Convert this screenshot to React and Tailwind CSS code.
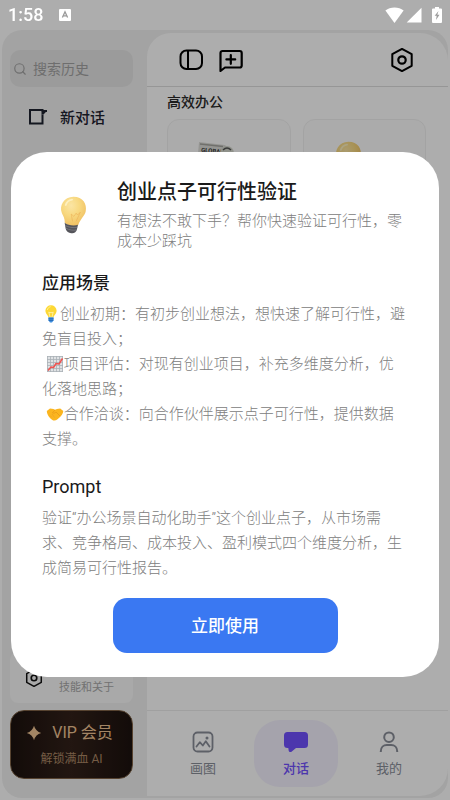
import { Search } from 'lucide-react';

const fontStack = "font-[Roboto,'Noto_Sans_CJK_SC',sans-serif]";

function InputMethodIcon() {
  return (
    <svg aria-hidden="true" className="h-3 w-3" viewBox="0 0 12 12">
      <rect width="12" height="12" rx="1" fill="#fff" />
      <path d="M3.4 8.6 6 2.8l2.6 5.8M4.4 6.8h3.2" fill="none" stroke="#9a9a9a" strokeWidth="1.3" />
    </svg>
  );
}

function WifiIcon() {
  return (
    <svg aria-hidden="true" className="h-4 w-[19px]" viewBox="0 0 20 16" preserveAspectRatio="none">
      <path d="M10 16 .4 3.6C3 1.4 6.4.5 10 .5s7 .9 9.6 3.1L10 16z" fill="#fff" />
    </svg>
  );
}

function SignalIcon() {
  return (
    <svg aria-hidden="true" className="h-4 w-4" viewBox="0 0 16 16">
      <path d="M15.5.8v14.7H.7z" fill="#fff" />
    </svg>
  );
}

function BatteryIcon() {
  return (
    <svg aria-hidden="true" className="h-4 w-[10px]" viewBox="0 0 10 16">
      <path d="M3 0h4v1.5h2a1 1 0 0 1 1 1V15a1 1 0 0 1-1 1H1a1 1 0 0 1-1-1V2.5a1 1 0 0 1 1-1h2z" fill="#fff" />
      <path d="M6.5 4 2.7 8.8h2L4 13l3.5-5.2H5.3z" fill="#9b9b9b" />
    </svg>
  );
}

function PanelIcon() {
  return (
    <svg aria-hidden="true" className="h-6 w-6" viewBox="0 0 24 24" fill="none" stroke="currentColor" strokeWidth="2">
      <rect x="1.5" y="2.5" width="21.5" height="18.5" rx="6" />
      <path d="M9 2.5V21" />
    </svg>
  );
}

function ChatPlusIcon() {
  return (
    <svg aria-hidden="true" className="h-6 w-6" viewBox="0 0 24 24" fill="none" stroke="currentColor" strokeWidth="2.2" strokeLinejoin="round" strokeLinecap="round">
      <path d="M1.5 23V5a2 2 0 0 1 2-2h17.2a2 2 0 0 1 2 2v12.500a2 2 0 0 1-2 2H6z" />
      <path d="M11.8 7v8.800M7.400 11.400h8.800" />
    </svg>
  );
}

function HexIcon({ className }) {
  return (
    <svg aria-hidden="true" className={className} viewBox="0 0 24 24" fill="none" stroke="currentColor" strokeWidth="2" strokeLinejoin="round">
      <path d="m12 .9 9.7 5.3v11.6L12 23.100l-9.700-5.300V6.200z" />
      <circle cx="12" cy="12" r="3.7" strokeWidth="2.2" />
    </svg>
  );
}

function NewChatIcon() {
  return (
    <svg aria-hidden="true" className="h-5 w-5" viewBox="0 0 20 20" fill="none" stroke="currentColor" strokeWidth="2">
      <path d="M14.500 6.500V15.500H2V2h12.500v1.500" />
      <path d="M14.500 6.500V3H19M15 5.500l2-2" />
    </svg>
  );
}

function ImageIcon() {
  return (
    <svg aria-hidden="true" className="h-[22px] w-[22px]" viewBox="0 0 22 22" fill="none" stroke="currentColor" strokeWidth="1.8" strokeLinecap="round" strokeLinejoin="round">
      <rect x="1.5" y="1.5" width="19" height="19" rx="4" />
      <path d="m4.500 15.500 3.300-4.300 3 3.300 3-4.200 3.700 5.200" />
      <circle cx="15" cy="7" r="1.5" fill="currentColor" stroke="none" />
    </svg>
  );
}

function ChatIcon() {
  return (
    <svg aria-hidden="true" className="h-[22px] w-6" viewBox="0 0 24 22" fill="currentColor">
      <path d="M3.500 1h17a3.500 3.500 0 0 1 3.500 3.500v9a3.500 3.500 0 0 1-3.500 3.500H12l-4.500 3.700c-1 .8-2.600.3-2.800-1L4.300 17h-.8A3.500 3.500 0 0 1 0 13.500v-9A3.500 3.500 0 0 1 3.500 1z" />
    </svg>
  );
}

function UserIcon() {
  return (
    <svg aria-hidden="true" className="h-[22px] w-[22px]" viewBox="0 0 22 22" fill="none" stroke="currentColor" strokeWidth="2">
      <circle cx="11" cy="6.2" r="4.8" />
      <path d="M2.800 21v-.8c0-3.700 2.700-6.200 6-6.200h4.400c3.300 0 6 2.500 6 6.200v.8" />
    </svg>
  );
}

function SparkIcon() {
  return (
    <svg aria-hidden="true" className="h-4 w-4" viewBox="0 0 16 16">
      <path d="M8 .8Q9.600 6.400 15.200 8 9.600 9.600 8 15.200 6.400 9.600.8 8 6.400 6.400 8 .8z" fill="currentColor" />
    </svg>
  );
}

function Bulb({ id, className }) {
  return (
    <svg aria-hidden="true" className={className} viewBox="0 0 40 44" fill="none">
      <defs>
        <radialGradient id={id} cx="0.4" cy="0.3" r="0.75">
          <stop offset="0" stopColor="#fbe5a4" />
          <stop offset="0.45" stopColor="#f8d981" />
          <stop offset="1" stopColor="#efbd5e" />
        </radialGradient>
      </defs>
      <path d="M11 30.500c0-5-1.800-7.500-3.200-10.500C4.500 12 10 2 20.500 2 31 2 35.500 10 34 18c-1 5-6 8.500-8.200 15-3 2.300-11.500 1.500-14.800-2.500z" fill={`url(#${id})`} />
      <path d="m19.500 29-1.500-8 3 2.500 2.500-3.500 1.500 2 3-3-4.500 10" stroke="#eaa84c" strokeOpacity=".5" />
      <path d="M12 11c1-3.500 3.500-5.500 7-6" stroke="#fdf0c0" strokeWidth="2" strokeLinecap="round" />
      <path d="M10.800 30.500c3.500 2.800 10.500 3.800 14.700 2.200l-1.200 5.300c-.8 3-3 4.500-6.300 4-3-.5-5-1.500-6-4.500z" fill="#55555b" />
      <path d="M11.300 33.500c3.500 2 9 3 13.300 2M12.200 36.500c3.500 2 8 2.800 11.800 1.900" stroke="#7c7c82" strokeWidth=".9" />
    </svg>
  );
}

function EmojiBulb() {
  return (
    <svg role="img" aria-label="💡" className="inline-block h-[18px] w-[18px] align-[-4px]" viewBox="0 0 18 18">
      <path d="M6.400 12.500c0-2.200-3-3.300-3-7A5.600 5.600 0 0 1 9 .3a5.600 5.600 0 0 1 5.600 5.200c0 3.700-3 4.800-3 7z" fill="#fdd835" />
      <path d="M8 12 6.800 7l1.400.9.8-.9.8.9 1.400-.9L10 12" fill="none" stroke="#fff3a8" strokeWidth=".9" />
      <path d="M5.500 4.500c.4-1.500 1.400-2.300 2.700-2.700" stroke="#fff59d" fill="none" strokeLinecap="round" />
      <path d="M6.400 12.300h5.200v3L10 17.500H8l-1.600-2.200z" fill="#3f8fe0" />
      <path d="M6.400 13.800h5.200M6.800 15.500h4.400" stroke="#1d5fa8" strokeWidth=".7" />
    </svg>
  );
}

function EmojiChart() {
  return (
    <svg role="img" aria-label="📈" className="inline-block h-[18px] w-[18px] align-[-4px]" viewBox="0 0 18 18" fill="none">
      <rect x="1" y="1" width="16" height="16" fill="#dfe2e4" />
      <path d="M1.500 1v16M4.500 1v16M7.500 1v16M10.500 1v16M13.500 1v16M16.500 1v16M1 1.500h16M1 4.500h16M1 7.500h16M1 10.500h16M1 13.500h16M1 16.500h16" stroke="#a9b1b6" strokeWidth=".8" />
      <path d="m2 15.500 3-3.500 2.500.5 2.500-4 3 .5 3.500-5.500" stroke="#ef5350" strokeWidth="1.5" strokeLinejoin="round" />
    </svg>
  );
}

function EmojiHandshake() {
  return (
    <svg role="img" aria-label="🤝" className="inline-block h-[18px] w-[18px] align-[-4px]" viewBox="0 0 18 18" fill="none">
      <path d="M.8 6 4 3.600l3.500.5L9 4.800l2-.9 3.200-.3L17.300 6c-.3 3-2 5-3.800 6.500-1.500 1.500-3 3-5 3-1.700 0-3.200-1.200-4.500-2.600C2.200 11 .9 9 .8 6z" fill="#fbb51f" />
      <path d="M9 5 6.500 7.800c1.200.8 2.500.2 3.500-.8l4 4" stroke="#e89a18" strokeWidth=".8" />
      <path d="m4 10.500 2 2m0-3.500 2.500 3.500" stroke="#eca324" strokeWidth=".8" />
    </svg>
  );
}

function Newspaper() {
  return (
    <svg aria-hidden="true" className="h-14 w-14" viewBox="0 0 56 56" fill="none">
      <path d="m3 0 26 3 4 4-6 44-28-4z" fill="#dcdcd8" />
      <path d="m4 2 23 2.500" stroke="#a5a5a0" strokeWidth="1.5" />
      <text x="5" y="10" transform="rotate(5 5 10)" fontSize="6" fontWeight="700" fill="#333">GLOBAL</text>
      <path d="m2 18 25 2m-26 3 25 2m-26 3 25 2" stroke="#777" />
      <circle cx="31" cy="11" r="7" fill="#d3d6cc" />
      <path d="M27 8c3-3 6-2 8 0" stroke="#555" strokeWidth="1.5" />
    </svg>
  );
}

function StatusBar() {
  return (
    <header className="relative z-20 flex h-[30px] items-center justify-between px-2 text-white">
      <div className="flex items-center gap-4">
        <span className="text-lg font-medium">1:58</span>
        <InputMethodIcon />
      </div>
      <div className="flex items-center gap-[2px]">
        <WifiIcon />
        <SignalIcon />
        <span className="ml-2 flex">
          <BatteryIcon />
        </span>
      </div>
    </header>
  );
}

function Sidebar() {
  return (
    <aside className="flex w-[145px] shrink-0 flex-col pt-5 pr-[14px] pb-[19px] pl-2">
      <label className="flex h-[37px] items-center gap-1.5 rounded-[10px] bg-[#e5e5e5] pl-[3px] text-[#a3a3a3]">
        <Search className="h-[14px] w-[14px] shrink-0" strokeWidth={2} />
        <input
          type="search"
          aria-label="搜索历史"
          placeholder="搜索历史"
          className="w-full min-w-0 bg-transparent text-sm outline-none placeholder:text-[#a3a3a3]"
        />
      </label>
      <button type="button" className="mt-5 flex items-center gap-3 pl-[18px] text-[15px] font-medium text-[#1e2230]">
        <NewChatIcon />
        新对话
      </button>

      <button type="button" className="mt-auto flex items-center gap-4 rounded-lg bg-[#f9f9f9] pt-2 pb-[7px] pl-[15px] text-[#111]">
        <HexIcon className="h-[18px] w-[18px]" />
        <span className="flex flex-col text-left text-[11px] leading-4 text-[#a8a8a8]">
          <span className="text-sm leading-5 text-[#222]">设置</span>
          技能和关于
        </span>
      </button>
      <button
        type="button"
        className="mt-[7px] flex h-[69px] flex-col items-center justify-center gap-1 rounded-[14px] border border-[#806448] bg-linear-to-r from-[#1c120e] via-[#33211a] to-[#1c120e] text-[#f0c594]"
      >
        <span className="flex items-center gap-2.5 pr-1 text-base leading-6">
          <SparkIcon />
          VIP 会员
        </span>
        <span className="text-xs leading-5 text-[#ac8866]">解锁满血 AI</span>
      </button>
    </aside>
  );
}

function NavItem({ label, active, children }) {
  return (
    <a
      href="#"
      aria-current={active ? 'page' : undefined}
      className={
        active
          ? 'flex h-[67px] w-[84px] flex-col items-center justify-center gap-1.5 rounded-[26px] bg-[#f4f1fe] pt-[3px] text-[13px] leading-5 font-medium text-[#7050ff]'
          : 'flex h-[67px] w-[84px] flex-col items-center justify-center gap-1.5 pt-[3px] text-[13px] leading-5 text-[#8a8e99]'
      }
    >
      {children}
      {label}
    </a>
  );
}

function Main() {
  return (
    <main className="mt-[3px] mb-[2px] flex min-w-0 flex-1 flex-col rounded-l-[24px] rounded-r-[28px] rounded-bl-none bg-white">
      <div className="flex h-[54px] items-center gap-4 border-b border-[#dedede] pr-[34px] pl-8 text-black">
        <button type="button" aria-label="侧栏">
          <PanelIcon />
        </button>
        <button type="button" aria-label="新对话">
          <ChatPlusIcon />
        </button>
        <button type="button" aria-label="设置" className="ml-auto">
          <HexIcon className="h-6 w-6" />
        </button>
      </div>

      <section className="flex-1 px-5 pt-[5px]">
        <h2 className="text-sm leading-5 font-medium text-[#2a2a2a]">高效办公</h2>
        <div className="mt-[7px] grid grid-cols-2 gap-3 pr-[2px]">
          <div className="flex h-40 rounded-xl border border-[#f1f1f1] bg-[#fdfdfd] pt-[22px] pl-7">
            <Newspaper />
          </div>
          <div className="flex h-40 rounded-xl border border-[#f1f1f1] bg-[#fdfdfd] pt-5 pl-6">
            <Bulb id="bulb-card" className="h-10 w-10" />
          </div>
        </div>
      </section>

      <nav className="flex items-center justify-center gap-[9px] border-t border-[#ececec] py-[9px] pr-[3px]">
        <NavItem label="画图">
          <ImageIcon />
        </NavItem>
        <NavItem label="对话" active>
          <ChatIcon />
        </NavItem>
        <NavItem label="我的">
          <UserIcon />
        </NavItem>
      </nav>
    </main>
  );
}

function PromptDialog() {
  return (
    <div className="fixed inset-0 z-10 flex items-center justify-center bg-black/32 px-[11px] pt-7">
      <div
        role="dialog"
        aria-modal="true"
        aria-labelledby="dialog-title"
        className="w-full rounded-[36px] bg-white px-[31px] pt-[27px] pb-6"
      >
        <div className="flex items-center gap-[13px]">
          <div className="flex w-[62px] shrink-0 justify-center">
            <Bulb id="bulb-dialog" className="h-10 w-10" />
          </div>
          <div>
            <h1 id="dialog-title" className="text-xl leading-[26px] font-medium text-[#1a1a1a]">
              创业点子可行性验证
            </h1>
            <p className="mt-1.5 text-[15px] leading-5 font-light text-[#808080]">
              有想法不敢下手？帮你快速验证可行性，零成本少踩坑
            </p>
          </div>
        </div>

        <h2 className="mt-[19px] text-[17px] leading-[26px] font-medium text-[#1a1a1a]">应用场景</h2>
        <div className="mt-1.5 text-[15px] leading-[25px] font-light text-[#808080]">
          <p>
            <EmojiBulb />
            创业初期：有初步创业想法，想快速了解可行性，避免盲目投入；
          </p>
          <p>
            &nbsp;
            <EmojiChart />
            项目评估：对现有创业项目，补充多维度分析，优化落地思路；
          </p>
          <p>
            &nbsp;
            <EmojiHandshake />
            合作洽谈：向合作伙伴展示点子可行性，提供数据支撑。
          </p>
        </div>

        <h2 className="mt-[22px] text-lg leading-[26px] text-[#1a1a1a]">Prompt</h2>
        <p className="mt-1.5 text-[15px] leading-[25px] font-light text-[#808080]">
          验证“办公场景自动化助手”这个创业点子，从市场需求、竞争格局、成本投入、盈利模式四个维度分析，生成简易可行性报告。
        </p>

        <button
          type="button"
          className="mx-auto mt-[17px] block h-[55px] w-[225px] rounded-[14px] bg-[#3a78f2] pt-1 text-[17px] font-medium text-white"
        >
          立即使用
        </button>
      </div>
    </div>
  );
}

export default function App() {
  return (
    <div lang="zh-CN" className={`${fontStack} flex min-h-screen flex-col bg-white`}>
      <StatusBar />
      <div className="mx-[2px] mb-[2px] flex flex-1 rounded-[20px] bg-[#f1f1f1]">
        <Sidebar />
        <Main />
      </div>
      <PromptDialog />
    </div>
  );
}
